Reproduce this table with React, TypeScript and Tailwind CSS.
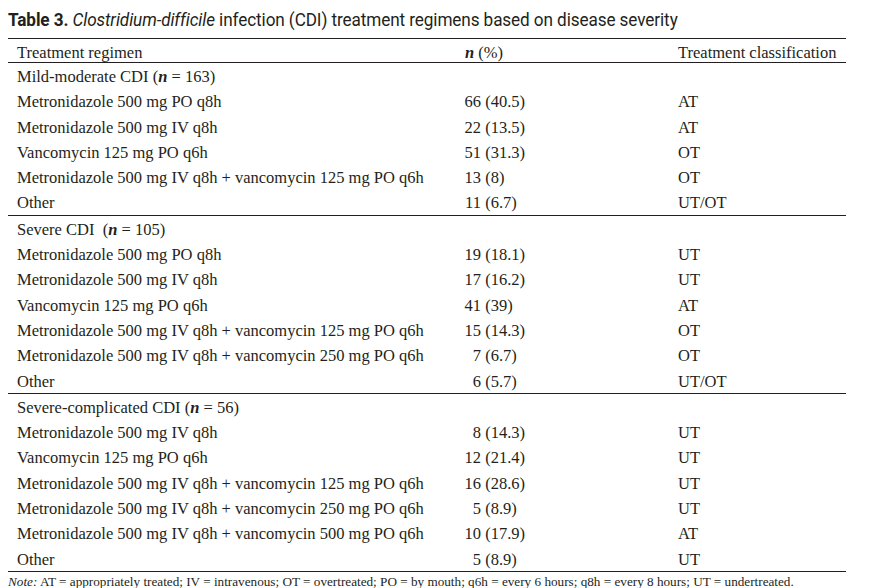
import { Fragment } from 'react'

interface Row {
  regimen: string
  n: string
  pct: string
  cls: string
}

interface Section {
  label: string
  n: string
  gap?: boolean
  rows: Row[]
}

const sections: Section[] = [
  {
    label: 'Mild-moderate CDI',
    n: '163',
    rows: [
      { regimen: 'Metronidazole 500 mg PO q8h', n: '66', pct: '40.5', cls: 'AT' },
      { regimen: 'Metronidazole 500 mg IV q8h', n: '22', pct: '13.5', cls: 'AT' },
      { regimen: 'Vancomycin 125 mg PO q6h', n: '51', pct: '31.3', cls: 'OT' },
      { regimen: 'Metronidazole 500 mg IV q8h + vancomycin 125 mg PO q6h', n: '13', pct: '8', cls: 'OT' },
      { regimen: 'Other', n: '11', pct: '6.7', cls: 'UT/OT' },
    ],
  },
  {
    label: 'Severe CDI',
    n: '105',
    gap: true,
    rows: [
      { regimen: 'Metronidazole 500 mg PO q8h', n: '19', pct: '18.1', cls: 'UT' },
      { regimen: 'Metronidazole 500 mg IV q8h', n: '17', pct: '16.2', cls: 'UT' },
      { regimen: 'Vancomycin 125 mg PO q6h', n: '41', pct: '39', cls: 'AT' },
      { regimen: 'Metronidazole 500 mg IV q8h + vancomycin 125 mg PO q6h', n: '15', pct: '14.3', cls: 'OT' },
      { regimen: 'Metronidazole 500 mg IV q8h + vancomycin 250 mg PO q6h', n: '7', pct: '6.7', cls: 'OT' },
      { regimen: 'Other', n: '6', pct: '5.7', cls: 'UT/OT' },
    ],
  },
  {
    label: 'Severe-complicated CDI',
    n: '56',
    rows: [
      { regimen: 'Metronidazole 500 mg IV q8h', n: '8', pct: '14.3', cls: 'UT' },
      { regimen: 'Vancomycin 125 mg PO q6h', n: '12', pct: '21.4', cls: 'UT' },
      { regimen: 'Metronidazole 500 mg IV q8h + vancomycin 125 mg PO q6h', n: '16', pct: '28.6', cls: 'UT' },
      { regimen: 'Metronidazole 500 mg IV q8h + vancomycin 250 mg PO q6h', n: '5', pct: '8.9', cls: 'UT' },
      { regimen: 'Metronidazole 500 mg IV q8h + vancomycin 500 mg PO q6h', n: '10', pct: '17.9', cls: 'AT' },
      { regimen: 'Other', n: '5', pct: '8.9', cls: 'UT' },
    ],
  },
]

const serif = "font-['Liberation_Serif','Times_New_Roman',serif]"

export default function App() {
  return (
    <div className="w-[869px] h-[588px] bg-white text-[#231f20] overflow-hidden">
      <div className="h-[38px] pl-[8px] pt-[9px] overflow-hidden whitespace-nowrap">
        <p className="block w-max origin-left scale-x-[0.98] text-[17.5px] leading-[22px] font-['Roboto','Liberation_Sans',sans-serif] tracking-[-0.1px]">
          <span className="font-bold">Table 3.</span>{' '}
          <span className="italic">Clostridium-difficile</span> infection (CDI)
          treatment regimens based on disease severity
        </p>
      </div>

      <div className={`ml-[8px] w-[838px] ${serif} text-[16.5px]`}>
        <div className="border-t-[1.5px] border-b-[1.5px] border-[#231f20] h-[25px] pt-[2px] grid grid-cols-[440px_230px_1fr] items-center">
          <span className="pl-[9px]">Treatment regimen</span>
          <span className="pl-[17px]">
            <b className="italic">n</b> (%)
          </span>
          <span>Treatment classification</span>
        </div>

        {sections.map(s => (
          <div key={s.label} className="border-b-[1.5px] border-[#231f20]">
            <div className="h-[25.3px] pt-[2px] grid grid-cols-[440px_230px_1fr] items-center">
              <span className="pl-[9px] whitespace-nowrap">
                {s.label}
                {s.gap ? '\u00a0 (' : ' ('}
                <b className="italic">n</b> = {s.n})
              </span>
            </div>
            {s.rows.map((r, i) => (
              <Fragment key={i}>
                <div className="h-[25.3px] pt-[2px] grid grid-cols-[440px_230px_1fr] items-center">
                  <span className="pl-[9px] whitespace-nowrap">{r.regimen}</span>
                  <span className="pl-[8px] flex whitespace-nowrap">
                    <span className="w-[25px] text-right">{r.n}</span>
                    <span>&nbsp;({r.pct})</span>
                  </span>
                  <span>{r.cls}</span>
                </div>
              </Fragment>
            ))}
          </div>
        ))}
      </div>

      <p
        className={`block w-max pl-[8px] pt-[3px] ${serif} text-[13.2px] leading-[14px] whitespace-nowrap`}
      >
        <span className="italic">Note:</span> AT = appropriately treated; IV =
        intravenous; OT = overtreated; PO = by mouth; q6h = every 6 hours; q8h =
        every 8 hours; UT = undertreated.
      </p>
    </div>
  )
}
